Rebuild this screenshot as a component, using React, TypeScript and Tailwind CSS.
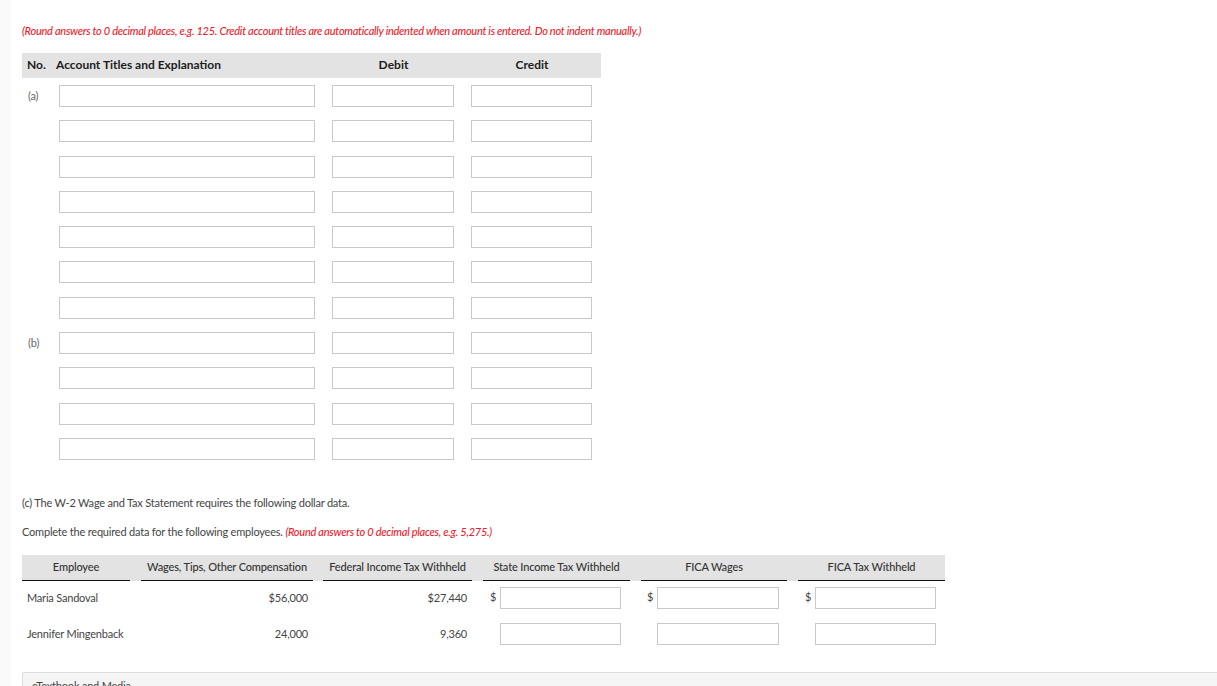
const journalRows = ["(a)", "", "", "", "", "", "", "(b)", "", "", ""];

const employees = [
  { name: "Maria Sandoval", wages: "$56,000", federal: "$27,440", dollar: "$" },
  { name: "Jennifer Mingenback", wages: "24,000", federal: "9,360", dollar: "" },
];

const wageHeaders = [
  { label: "Employee", cls: "w-[108px]" },
  { label: "Wages, Tips, Other Compensation", cls: "w-[172px] ml-[11px]" },
  { label: "Federal Income Tax Withheld", cls: "w-[149px] ml-[10px]" },
  { label: "State Income Tax Withheld", cls: "w-[147px] ml-[11px]" },
  { label: "FICA Wages", cls: "w-[146px] ml-[11px]" },
  { label: "FICA Tax Withheld", cls: "w-[147px] ml-[11px]" },
];

function Field({ className }: { className: string }) {
  return (
    <input
      type="text"
      aria-label="answer"
      className={`h-[22px] border border-[#c9c9c9] bg-white outline-none ${className}`}
    />
  );
}

function DollarField({ dollar, width }: { dollar: string; width: string }) {
  return (
    <div className="flex items-center">
      <span className="w-[10px] pb-[3px] text-[#444]">{dollar}</span>
      <Field className={width} />
    </div>
  );
}

export default function App() {
  return (
    <div className="flex h-[686px] w-full items-start overflow-hidden bg-white font-['Lato','Noto_Sans',sans-serif] text-[11px] tracking-[-0.2px] text-[#444]">
      <div className="h-full w-[11px] shrink-0 bg-[#fafafa]" />
      <main className="flex min-w-0 flex-1 flex-col pl-[11px]">
        <p className="mt-[24px] h-[14px] leading-[14px] font-medium tracking-[-0.27px] text-[#ed1c2e] italic">
          (Round answers to 0 decimal places, e.g. 125. Credit account titles are automatically indented when amount is entered. Do not indent manually.)
        </p>

        <div className="mt-[15px] flex h-[25px] w-[579px] items-center bg-[#e3e3e3] pb-[1px] text-[12px] font-bold tracking-normal text-[#1c1c1c]">
          <span className="ml-[5px] w-[29px]">No.</span>
          <span className="w-[268px]">Account Titles and Explanation</span>
          <span className="w-[139px] text-center">Debit</span>
          <span className="w-[138px] text-center">Credit</span>
        </div>

        <div className="mt-[7px] flex flex-col gap-[13.3px]">
          {journalRows.map((label, i) => (
            <div key={i} className="flex h-[22px] items-center">
              <span className="w-[37px] pl-[6px] text-[#666]">{label}</span>
              <Field className="w-[256px]" />
              <Field className="ml-[17px] w-[122px]" />
              <Field className="ml-[17px] w-[121px]" />
            </div>
          ))}
        </div>

        <p className="mt-[36px] h-[14px] leading-[14px]">
          (c) The W-2 Wage and Tax Statement requires the following dollar data.
        </p>
        <p className="mt-[15px] h-[14px] leading-[14px]">
          Complete the required data for the following employees.{" "}
          <span className="font-medium tracking-[-0.26px] text-[#ed1c2e] italic">
            (Round answers to 0 decimal places, e.g. 5,275.)
          </span>
        </p>

        <div className="mt-[16px] flex h-[26px] w-[923px] bg-[#e3e3e3]">
          {wageHeaders.map((h) => (
            <div
              key={h.label}
              className={`flex items-center justify-center border-b border-[#111] font-medium tracking-[-0.14px] text-[#333] ${h.cls}`}
            >
              {h.label}
            </div>
          ))}
        </div>

        <div className="mt-[6px] flex flex-col gap-[13px]">
          {employees.map((e) => (
            <div key={e.name} className="flex h-[23px] items-center">
              <span className="w-[119px] pl-[5px]">{e.name}</span>
              <span className="w-[167px] text-right">{e.wages}</span>
              <span className="w-[159px] text-right">{e.federal}</span>
              <div className="ml-[23px]">
                <DollarField dollar={e.dollar} width="w-[121px]" />
              </div>
              <div className="ml-[26px]">
                <DollarField dollar={e.dollar} width="w-[122px]" />
              </div>
              <div className="ml-[26px]">
                <DollarField dollar={e.dollar} width="w-[121px]" />
              </div>
            </div>
          ))}
        </div>

        <div className="mt-[26px] h-[40px] rounded-tl-[2px] border-t border-l border-[#dcdcdc] bg-[#f5f5f5] pt-[5px] pl-[9px] text-[#444]">
          eTextbook and Media
        </div>
      </main>
    </div>
  );
}
